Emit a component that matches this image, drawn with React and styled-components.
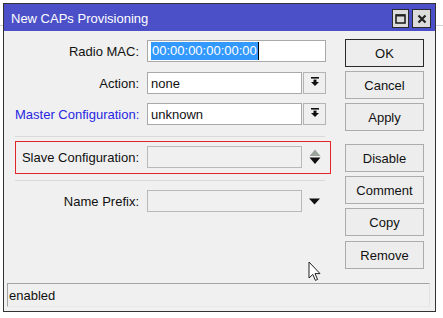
import React from 'react';
import styled, { createGlobalStyle } from 'styled-components';

const Global = createGlobalStyle`
  html, body { margin: 0; padding: 0; }
  body {
    width: 443px; height: 318px; overflow: hidden; background: #fff;
    font-family: "Liberation Sans", Arial, sans-serif; font-size: 13px; color: #111;
  }
`;

const Desktop = styled.div`
  width: 443px; height: 318px; box-sizing: border-box; padding: 3px 0 0 3px;
  background: linear-gradient(to bottom, #fff 0 25px, #d2d2d2 25px 26px, #fff 26px);
`;

const Window = styled.div`
  position: relative;
  width: 433px; height: 309px; box-sizing: border-box;
  border: 1px solid #333;
  background: #f0f0f0;
  display: flex; flex-direction: column;
`;

const TitleBar = styled.div`
  height: 27px; flex-shrink: 0; box-sizing: border-box;
  background: #4b50c8;
  display: flex; align-items: center;
  padding: 0 4px 0 7px;
`;

const Title = styled.div`
  flex: 1; color: #fff; font-size: 13px; padding-top: 2px;
`;

const TitleButtons = styled.div`
  display: flex; gap: 3px; align-self: flex-start; margin-top: 5px;
`;

const TitleButton = styled.div`
  width: ${p => p.$w}px; height: 19px; box-sizing: border-box;
  border: 1px solid #2b2b2b; background: #dcdcdc;
  display: flex; align-items: center; justify-content: center;
`;

const Body = styled.div`
  flex: 1; display: flex; gap: 16px;
  padding: 8px 0 0 11px;
`;

const Form = styled.div`
  width: 314px; display: flex; flex-direction: column; padding-top: 1px;
`;

const Row = styled.div`
  display: flex; align-items: center; height: 22px;
  margin-bottom: ${p => p.$mb || 0}px;
`;

const Label = styled.div`
  width: ${p => p.$w || 124}px; margin-right: 8px; text-align: right;
  white-space: nowrap;
  color: ${p => (p.$blue ? '#2727e3' : '#111')};
`;

const Field = styled.div`
  width: ${p => p.$w}px; height: 22px; box-sizing: border-box;
  border: 1px solid ${p => (p.$disabled ? '#b9b9b9' : '#a9a9a9')};
  background: ${p => (p.$disabled ? '#f0f0f0' : '#fff')};
  padding: 0 3px;
  display: flex; align-items: center;
  white-space: nowrap;
`;

const Selected = styled.span`
  background: #3399ff; color: #fff; padding: 1px 1px 1px 1px; line-height: 16px;
  border-right: 1px solid #000;
`;

const DropButton = styled.div`
  width: 23px; height: 22px; margin-left: 1px; box-sizing: border-box;
  border: 1px solid #b4b4b4; background: #efefef;
  display: flex; align-items: center; justify-content: center;
  padding-bottom: 4px;
`;

const ArrowSlot = styled.div`
  width: 23px; height: 22px; margin-left: 1px;
  display: flex; align-items: center; justify-content: center;
`;

const Separator = styled.div`
  width: 310px; height: 1px; background: #d9d9d9;
  margin: ${p => p.$m};
`;

const SlaveBox = styled.div`
  display: flex; align-items: center;
  border: 1px solid #e0262b;
  padding: 4px 0 5px 0;
  height: 22px;
  width: 314px; box-sizing: content-box;
  margin-left: 0;
`;

const Buttons = styled.div`
  width: 79px; display: flex; flex-direction: column;
`;

const Btn = styled.div`
  height: 28px; box-sizing: border-box;
  margin-top: ${p => p.$mt || 0}px;
  border: 1px solid ${p => (p.$default ? '#2a2a2a' : '#acacac')};
  background: #ededed;
  display: flex; align-items: center; justify-content: center;
  font-size: 13px; color: #111;
`;

const StatusBar = styled.div`
  height: 24px; box-sizing: border-box; flex-shrink: 0;
  margin: 0 5px 4px 3px;
  border-top: 1px solid #a3a3a3; border-left: 1px solid #a3a3a3;
  border-right: 1px solid #e2e2e2; border-bottom: 1px solid #e8e8e8;
  display: flex; align-items: center; padding-left: 1px;
  color: #111;
`;

const Cursor = styled.svg`
  position: absolute; left: 304px; top: 257px;
`;

const DropIcon = () => (
  <svg width="8" height="9" viewBox="0 0 8 9">
    <rect x="0" y="0" width="8" height="1.6" fill="#111" />
    <rect x="2.5" y="2.6" width="3" height="2.4" fill="#111" />
    <path d="M0 5 H8 L4 9 Z" fill="#111" />
  </svg>
);

const UpDownIcon = () => (
  <svg width="12" height="16" viewBox="0 0 12 16">
    <path d="M6 0.5 L11.5 7 H0.5 Z" fill="#9ba49b" />
    <path d="M0.5 8.5 H11.5 L6 15 Z" fill="#111" />
  </svg>
);

const DownIcon = () => (
  <svg width="11" height="7" viewBox="0 0 11 7">
    <path d="M0 0.5 H11 L5.5 6.5 Z" fill="#111" />
  </svg>
);

export default function App() {
  return (
    <>
      <Global />
      <Desktop>
        <Window>
          <TitleBar>
            <Title>New CAPs Provisioning</Title>
            <TitleButtons>
              <TitleButton $w={17}>
                <svg width="11" height="10" viewBox="0 0 11 10">
                  <rect x="1" y="1" width="9" height="8" fill="none" stroke="#222" strokeWidth="1.6" />
                  <rect x="1" y="0.5" width="9" height="2" fill="#222" />
                </svg>
              </TitleButton>
              <TitleButton $w={19}>
                <svg width="10" height="10" viewBox="0 0 10 10">
                  <path d="M1.5 1.5 L8.5 8.5 M8.5 1.5 L1.5 8.5" stroke="#222" strokeWidth="2.2" />
                </svg>
              </TitleButton>
            </TitleButtons>
          </TitleBar>
          <Body>
            <Form>
              <Row $mb={10}>
                <Label>Radio MAC:</Label>
                <Field $w={179}><Selected>00:00:00:00:00:00</Selected></Field>
              </Row>
              <Row $mb={9}>
                <Label>Action:</Label>
                <Field $w={155}>none</Field>
                <DropButton><DropIcon /></DropButton>
              </Row>
              <Row>
                <Label $blue>Master Configuration:</Label>
                <Field $w={155}>unknown</Field>
                <DropButton><DropIcon /></DropButton>
              </Row>
              <Separator $m="11px 0 4px 0" />
              <SlaveBox>
                <Label $w={123}>Slave Configuration:</Label>
                <Field $w={155} $disabled />
                <ArrowSlot><UpDownIcon /></ArrowSlot>
              </SlaveBox>
              <Separator $m="6px 0 9px 0" />
              <Row>
                <Label>Name Prefix:</Label>
                <Field $w={155} $disabled />
                <ArrowSlot><DownIcon /></ArrowSlot>
              </Row>
            </Form>
            <Buttons>
              <Btn $default>OK</Btn>
              <Btn $mt={4}>Cancel</Btn>
              <Btn $mt={4}>Apply</Btn>
              <Btn $mt={13}>Disable</Btn>
              <Btn $mt={4}>Comment</Btn>
              <Btn $mt={4}>Copy</Btn>
              <Btn $mt={5}>Remove</Btn>
            </Buttons>
          </Body>
          <StatusBar>enabled</StatusBar>
          <Cursor width="13" height="21" viewBox="0 0 13 21">
            <path d="M1 1 L1 17 L4.8 13.4 L7.4 19.4 L9.6 18.4 L7 12.6 L12 12.6 Z"
              fill="#fff" stroke="#222" strokeWidth="1" strokeLinejoin="round" />
          </Cursor>
        </Window>
      </Desktop>
    </>
  );
}
